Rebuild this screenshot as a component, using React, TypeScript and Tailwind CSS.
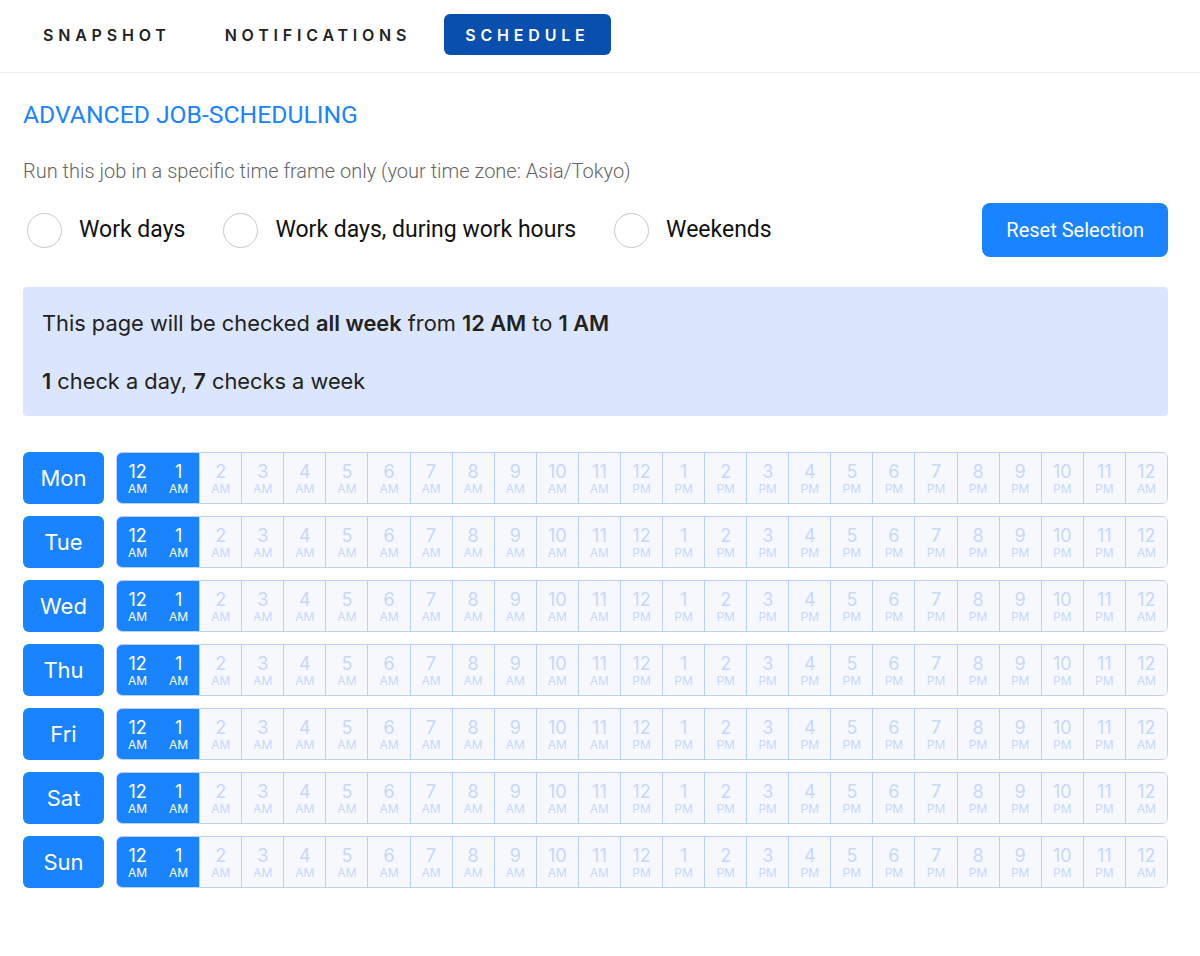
import React from "react";

const HOURS = [
  ["12", "AM"], ["1", "AM"], ["2", "AM"], ["3", "AM"], ["4", "AM"], ["5", "AM"],
  ["6", "AM"], ["7", "AM"], ["8", "AM"], ["9", "AM"], ["10", "AM"], ["11", "AM"],
  ["12", "PM"], ["1", "PM"], ["2", "PM"], ["3", "PM"], ["4", "PM"], ["5", "PM"],
  ["6", "PM"], ["7", "PM"], ["8", "PM"], ["9", "PM"], ["10", "PM"], ["11", "PM"],
  ["12", "AM"],
];

const DIAS = ["Mon", "Tue", "Wed", "Thu", "Fri", "Sat", "Sun"];

const geo = { fontFamily: "Inter, 'Noto Sans', sans-serif" };
const helv = { fontFamily: "Roboto, 'Liberation Sans', sans-serif" };

function Radio({ label }: { label: string }) {
  return (
    <label className="flex items-center gap-[17px] cursor-pointer">
      <span className="w-[35px] h-[35px] rounded-full border border-[#c9c9c9] bg-white" />
      <span className="text-[23px] text-[#111]">{label}</span>
    </label>
  );
}

function LinhaDia({ dia }: { dia: string }) {
  return (
    <div className="flex gap-[12px] h-[52px]">
      <button className="w-[81px] shrink-0 rounded-md bg-[#1a83ff] text-white text-[22px]">
        {dia}
      </button>
      <div className="flex flex-1 rounded-md border border-[#b7d1fb] overflow-hidden">
        {HOURS.map(([h, p], i) => {
          const ativo = i < 2;
          return (
            <div
              key={i}
              className={
                ativo
                  ? "flex-1 flex flex-col items-center justify-center bg-[#1a83ff] text-white"
                  : "flex-1 flex flex-col items-center justify-center bg-[#f7f8fe] text-[#c4d8fb] border-l border-[#b7d1fb]"
              }
            >
              <span className="text-[18px] leading-[21px]">{h}</span>
              <span className="text-[12px] leading-[14px]">{p}</span>
            </div>
          );
        })}
      </div>
    </div>
  );
}

export default function App() {
  return (
    <div className="min-h-screen bg-white" style={helv}>
      <header className="h-[73px] border-b border-[#eceef4] flex items-start pt-[14px] px-[22px] gap-[12px]" style={geo}>
        <button className="h-[41px] px-[21px] rounded-md text-[16px] font-semibold tracking-[0.3em] text-[#222]">
          SNAPSHOT
        </button>
        <button className="h-[41px] px-[21px] rounded-md text-[16px] font-semibold tracking-[0.3em] text-[#222]">
          NOTIFICATIONS
        </button>
        <button className="h-[41px] px-[21px] rounded-md text-[16px] font-semibold tracking-[0.3em] text-white bg-[#0b4fae]">
          SCHEDULE
        </button>
      </header>

      <main className="px-[23px] pr-[32px]">
        <h1 className="mt-[28px] text-[24.7px] text-[#1a83ff] leading-[28px]">ADVANCED JOB-SCHEDULING</h1>
        <p className="mt-[28px] text-[20px] font-light leading-[28px] text-[#666]">
          Run this job in a specific time frame only (your time zone: Asia/Tokyo)
        </p>

        <div className="mt-[18px] flex items-center justify-between">
          <div className="flex items-center gap-[38px] pl-[4px]">
            <Radio label="Work days" />
            <Radio label="Work days, during work hours" />
            <Radio label="Weekends" />
          </div>
          <button className="h-[54px] px-[24px] rounded-lg bg-[#1a83ff] text-white text-[20px]">
            Reset Selection
          </button>
        </div>

        <div className="mt-[30px] rounded bg-[#dbe5fd] px-[19px] pt-[22px] pb-[21px] text-[21.8px] text-[#222]" style={geo}>
          <p className="leading-[28px]">
            This page will be checked <b className="font-semibold">all week</b> from{" "}
            <b className="font-semibold">12 AM</b> to <b className="font-semibold">1 AM</b>
          </p>
          <p className="mt-[30px] leading-[28px]">
            <b className="font-semibold">1</b> check a day, <b className="font-semibold">7</b> checks a week
          </p>
        </div>

        <div className="mt-[36px] flex flex-col gap-[12px]" style={geo}>
          {DIAS.map((d) => (
            <LinhaDia key={d} dia={d} />
          ))}
        </div>
      </main>
    </div>
  );
}
